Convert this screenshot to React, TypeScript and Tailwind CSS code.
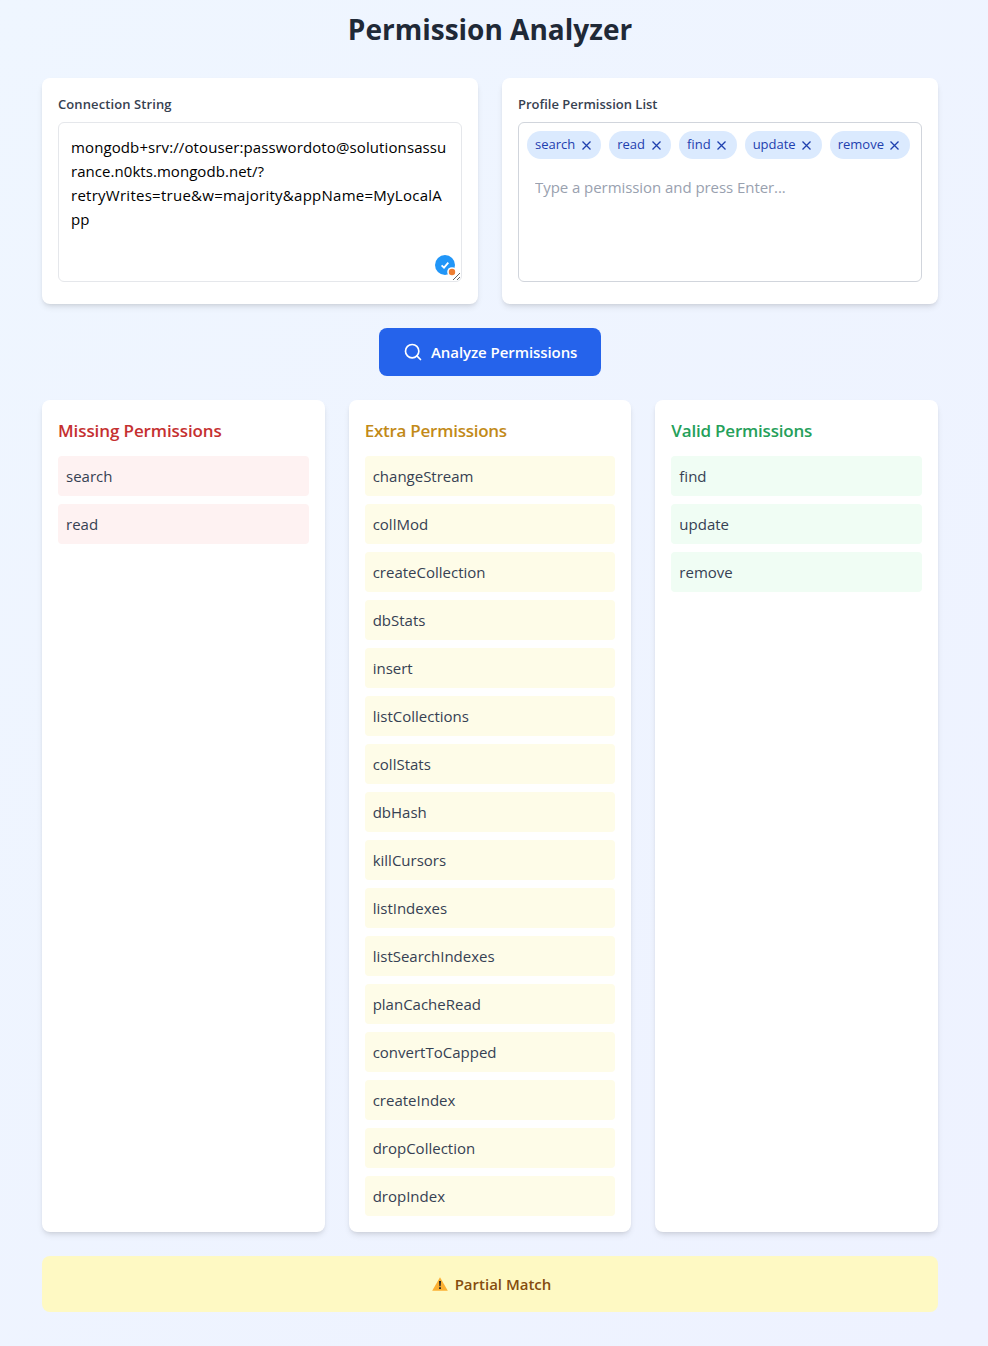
import React, { useState } from "react";
import { Search } from "lucide-react";

const connectionLines = [
  { text: "mongodb+srv://otouser:passwordoto@solutionsassu", className: "tracking-[0.11px]" },
  { text: "rance.n0kts.mongodb.net/?", className: "tracking-[0.05px]" },
  { text: "retryWrites=true&w=majority&appName=MyLocalA", className: "tracking-[0.26px]" },
  { text: "pp", className: "tracking-normal" },
];

const missing = ["search", "read"];
const extra = [
  "changeStream",
  "collMod",
  "createCollection",
  "dbStats",
  "insert",
  "listCollections",
  "collStats",
  "dbHash",
  "killCursors",
  "listIndexes",
  "listSearchIndexes",
  "planCacheRead",
  "convertToCapped",
  "createIndex",
  "dropCollection",
  "dropIndex",
];
const valid = ["find", "update", "remove"];

function Tag({ label, onRemove }: { label: string; onRemove: () => void }) {
  return (
    <span className="flex h-7 items-center rounded-full bg-blue-100 px-2 text-[13px] text-[#1e40af]">
      {label}
      <button type="button" aria-label={"Remove " + label} onClick={onRemove} className="ml-1 flex w-3.5 justify-center">
        <svg width="9" height="9" viewBox="0 0 9 9" fill="none" stroke="currentColor" strokeWidth="1.3">
          <path d="M.5.5l8 8M8.5.5l-8 8" />
        </svg>
      </button>
    </span>
  );
}

function Results({ title, items, titleClass, itemClass }: { title: string; items: string[]; titleClass: string; itemClass: string }) {
  return (
    <section className="rounded-lg bg-white p-4 shadow-md">
      <h2 className={"mb-[11px] flex h-7 items-center pt-px text-[17px] leading-7 font-semibold " + titleClass}>{title}</h2>
      <ul className="space-y-2 pt-px">
        {items.map((item) => (
          <li key={item} className={"h-10 rounded p-2 leading-6 text-gray-700 " + itemClass}>
            {item}
          </li>
        ))}
      </ul>
    </section>
  );
}

export default function App() {
  const [tags, setTags] = useState(["search", "read", "find", "update", "remove"]);
  return (
    <main className="h-[1346px] bg-linear-to-br from-[#eff6ff] to-[#eef2ff] pt-[11px] pr-[50px] pl-[42px] font-['Open_Sans',sans-serif] text-[15px]">
      <h1 className="mb-[31px] text-center text-[28px] leading-9 font-bold text-[#1f2937]">Permission Analyzer</h1>

      <div className="mb-6 grid grid-cols-2 gap-6">
        <section className="h-[226px] rounded-lg bg-white p-4 shadow-md">
          <h2 className="mb-2 text-[13px] leading-5 font-semibold tracking-[0.1px] text-[#374151]">Connection String</h2>
          <div className="relative h-40">
            <div
              role="textbox"
              aria-label="Connection String"
              contentEditable
              suppressContentEditableWarning
              spellCheck={false}
              className="h-40 w-full resize overflow-hidden rounded-md border border-gray-200 bg-white p-3 leading-6 whitespace-pre text-black outline-none"
            >
              {connectionLines.map((line) => (
                <div key={line.text} className={line.className}>
                  {line.text}
                </div>
              ))}
            </div>
            <svg className="pointer-events-none absolute top-[133px] left-[377px]" width="22" height="22" viewBox="0 0 22 22" fill="none">
              <circle cx="10" cy="10" r="10" fill="#2196f8" />
              <path d="M6.6 10.4l2.4 2.3L13.3 7.6" stroke="#fff" strokeWidth="1.8" />
              <circle cx="17" cy="17" r="4.8" fill="#fff" />
              <circle cx="17" cy="17" r="3.2" fill="#ed7d31" />
            </svg>
          </div>
        </section>

        <section className="h-[226px] rounded-lg bg-white p-4 shadow-md">
          <label htmlFor="permission" className="mb-2 block text-[13px] leading-5 font-semibold text-[#374151]">
            Profile Permission List
          </label>
          <div className="h-40 rounded-md border border-gray-300 p-2">
            <div className="flex gap-2">
              {tags.map((tag) => (
                <Tag key={tag} label={tag} onRemove={() => setTags(tags.filter((t) => t !== tag))} />
              ))}
            </div>
            <input
              id="permission"
              placeholder="Type a permission and press Enter..."
              className="mt-2 h-10 w-full bg-transparent px-2 tracking-[-0.06px] outline-none placeholder:text-gray-400"
            />
          </div>
        </section>
      </div>

      <div className="mb-6 flex justify-center">
        <button type="button" className="flex h-12 w-[222px] items-center rounded-lg bg-[#2563eb] pl-6 font-semibold text-white">
          <Search className="mr-2 shrink-0" size={20} />
          <span className="tracking-[-0.07px] whitespace-nowrap">Analyze Permissions</span>
        </button>
      </div>

      <div className="mb-6 grid h-[832px] grid-cols-3 gap-6">
        <Results title="Missing Permissions" items={missing} titleClass="tracking-[-0.1px] text-[#c53030]" itemClass="bg-[#fef2f2]" />
        <Results title="Extra Permissions" items={extra} titleClass="tracking-[-0.25px] text-[#c28a18]" itemClass="bg-[#fefce8]" />
        <Results title="Valid Permissions" items={valid} titleClass="tracking-[-0.2px] text-[#25a05a]" itemClass="bg-[#f0fdf4]" />
      </div>

      <div className="flex h-14 items-center justify-center rounded-lg bg-[#fef9c3] pl-[3px] font-semibold text-[#854d0e]">
        <svg className="mr-[7px]" width="16" height="14" viewBox="0 0 16 14">
          <path d="M8 .3L15.8 13.7H.2z" fill="#fbb034" />
          <path d="M7 4h2l-.4 5.2H7.4zM7.1 10.2h1.8v1.8H7.1z" fill="#222" />
        </svg>
        <span>Partial Match</span>
      </div>
    </main>
  );
}
